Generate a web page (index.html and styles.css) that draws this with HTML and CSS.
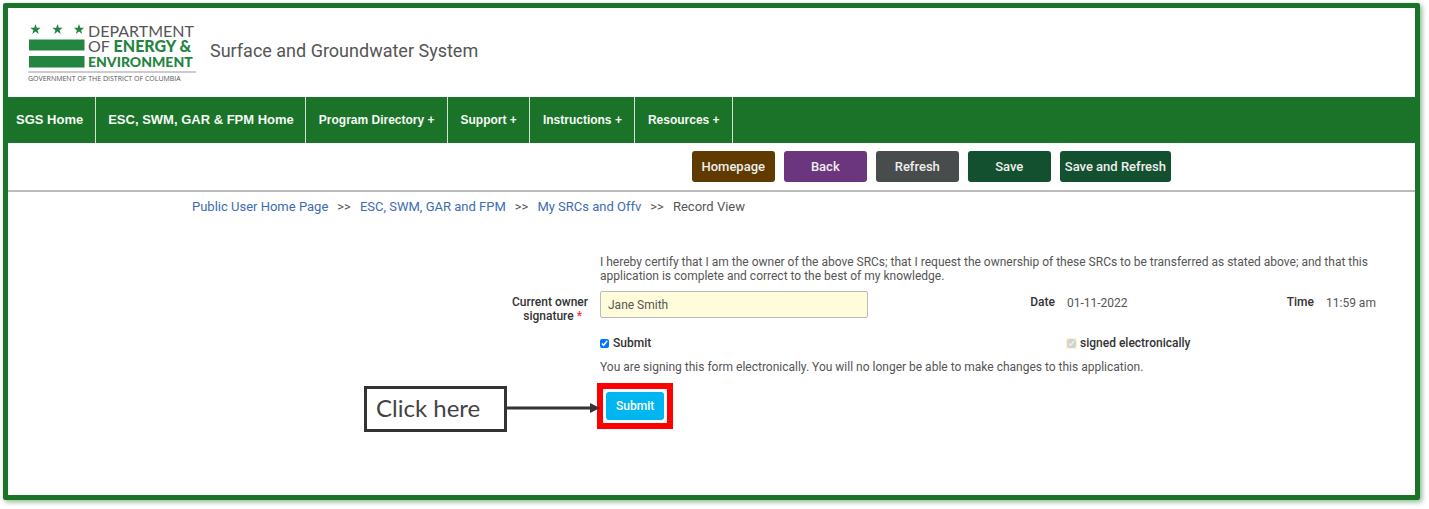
FILE: index.html
```html
<!DOCTYPE html>
<html lang="en">
<head>
<meta charset="utf-8">
<title>Surface and Groundwater System</title>
<link rel="stylesheet" href="styles.css">
</head>
<body>
<div class="frame">
  <header class="header">
    <svg class="logo" width="172" height="62" viewBox="26 22 172 62" role="img" aria-label="Department of Energy and Environment">
      <defs><path id="star" d="M0-5.4 1.3-1.7 5.2-1.7 2.1.7 3.2 4.4 0 2.1-3.2 4.4-2.1.7-5.2-1.7-1.3-1.7Z"/></defs>
      <g fill="#23853f">
        <use href="#star" x="35.500" y="29.500"/>
        <use href="#star" x="57.500" y="29.500"/>
        <use href="#star" x="79" y="29.500"/>
        <rect x="29" y="39.500" width="55.500" height="11"/>
        <rect x="29" y="56" width="55.500" height="11.500"/>
      </g>
      <rect x="28" y="71.500" width="168" height="1" fill="#999"/>
      <text class="logo-name" x="88" y="37">DEPARTMENT</text>
      <text class="logo-name" x="88" y="52">OF <tspan class="logo-strong">ENERGY &amp;</tspan></text>
      <text class="logo-name logo-last" x="88" y="67">ENVIRONMENT</text>
      <text class="logo-small" x="28" y="81">GOVERNMENT OF THE DISTRICT OF COLUMBIA</text>
    </svg>
    <h1 class="title">Surface and Groundwater System</h1>
  </header>
  <nav class="nav">
    <a class="home" href="#">SGS Home</a>
    <a class="home" href="#">ESC, SWM, GAR &amp; FPM Home</a>
    <a href="#">Program Directory +</a>
    <a href="#">Support +</a>
    <a href="#">Instructions +</a>
    <a href="#">Resources +</a>
  </nav>
  <div class="toolbar">
    <button class="btn brown">Homepage</button>
    <button class="btn purple">Back</button>
    <button class="btn gray">Refresh</button>
    <button class="btn green">Save</button>
    <button class="btn green">Save and Refresh</button>
  </div>
  <div class="crumbs">
    <a href="#">Public User Home Page</a><span>&gt;&gt;</span>
    <a href="#">ESC, SWM, GAR and FPM</a><span>&gt;&gt;</span>
    <a href="#">My SRCs and Offv</a><span>&gt;&gt;</span>
    <span>Record View</span>
  </div>
  <form class="form">
    <p class="wide certify">I hereby certify that I am the owner of the above SRCs; that I request the ownership of these SRCs to be transferred as stated above; and that this application is complete and correct to the best of my knowledge.</p>
    <label class="label owner" for="signature">Current owner<br>signature <span class="required">*</span></label>
    <input class="text" id="signature" type="text" value="Jane Smith">
    <span class="label">Date</span>
    <span class="value">01-11-2022</span>
    <span class="label">Time</span>
    <span class="value">11:59 am</span>
    <label class="check confirm"><input type="checkbox" checked>Submit</label>
    <label class="check signed"><input type="checkbox" checked disabled>signed electronically</label>
    <p class="wide notice">You are signing this form electronically. You will no longer be able to make changes to this application.</p>
    <div class="actions">
      <div class="callout">Click here</div>
      <svg class="arrow" width="93" height="12" viewBox="0 0 93 12" aria-hidden="true"><path d="M0 6H85" stroke="#333" stroke-width="3"/><path d="M83 1 93 6 83 11Z" fill="#333"/></svg>
      <div class="highlight"><button class="submit" type="button">Submit</button></div>
    </div>
  </form>
</div>
</body>
</html>
```
FILE: styles.css
```css
* { box-sizing: border-box; }
body {
  margin: 0;
  padding: 3px 9px 9px 3px;
  background: #fff;
  color: #555;
  font: 12px/14px Roboto, sans-serif;
}
p, h1 { margin: 0; }
a { text-decoration: none; }
button { border: 0; font-family: inherit; cursor: pointer; }

.frame {
  min-height: calc(100vh - 12px);
  border: 5px solid #1a7328;
  border-radius: 2px;
  box-shadow: 2px 2px 5px rgba(26, 115, 40, 0.5);
}

.header {
  display: flex;
  align-items: center;
  gap: 12px;
  padding: 14px 18px 13px;
}
.logo { flex: none; }
.logo-name { font: 16px Lato, sans-serif; fill: #555; }
.logo-strong { font-weight: 900; fill: #23853f; }
.logo-last { font-size: 14px; font-weight: 900; fill: #23853f; }
.logo-small { font: 7px "Open Sans", sans-serif; fill: #555; }
.title { padding-bottom: 4px; font-size: 18px; line-height: 24px; font-weight: 400; }

.nav { display: flex; background: #1a7328; }
.nav a {
  padding: 0 12px 0 13px;
  border-right: 1px solid #cfe3d2;
  color: #f4faf4;
  font: bold 12px/46px "Liberation Sans", Arial, sans-serif;
}
.nav .home { padding: 0 11px 0 12px; font-size: 13px; }
.nav .home:first-child { padding-left: 8px; padding-right: 12px; }

.toolbar {
  display: flex;
  justify-content: flex-end;
  gap: 9px;
  padding: 8px 244px 8px 0;
  border-bottom: 2px solid #bbb;
}
.btn {
  min-width: 83px;
  padding: 0 5px;
  border-radius: 3px;
  color: #eee;
  font-size: 13px;
  line-height: 31px;
  font-weight: 500;
}
.brown { background: #603b00; }
.purple { background: #6c367e; }
.gray { background: #494c4d; }
.green { background: #12502f; }

.crumbs {
  display: flex;
  gap: 9px;
  padding: 7px 184px;
  font-size: 13px;
  line-height: 16px;
}
.crumbs a { color: #3c6cb4; }

.form {
  display: grid;
  grid-template-columns: 580fr 268fr 175fr 120fr 115fr 89fr;
  column-gap: 12px;
  padding-top: 33px;
}
.wide { grid-column: 2 / -1; }
.certify { padding-right: 24px; }
.label {
  padding-top: 12px;
  text-align: right;
  color: #333;
  font-weight: 500;
}
.required { margin-right: 6px; color: #f33; }
.value { padding-top: 13px; }
.text {
  width: 100%;
  height: 27px;
  margin-top: 8px;
  padding: 0 7px;
  border: 1px solid #bbb;
  border-radius: 2px;
  background: #fffcdc;
  color: #555;
  font: inherit;
}
.check {
  display: flex;
  align-items: center;
  gap: 4px;
  margin-top: 13px;
  color: #333;
  font-weight: 500;
}
.check input { width: 9px; height: 9px; margin: 0; }
.confirm { grid-column: 2; }
.signed { grid-column: 4 / -1; }
.signed input { outline: 1px solid #fff6c4; }
.notice { padding-top: 10px; }

.actions {
  display: flex;
  grid-column: 1 / -1;
  align-items: flex-start;
  padding: 9px 0 0 356px;
}
.callout {
  width: 143px;
  margin-top: 3px;
  padding: 7px 9px 9px;
  border: 3px solid #333;
  background: #fff;
  color: #444;
  font: 24px/24px Lato, sans-serif;
}
.arrow { flex: none; margin: 19px -3px 0 0; z-index: 1; }
.highlight {
  display: flex;
  padding: 3px;
  border: 6px solid #f00;
}
.submit {
  padding: 0 10px;
  border-radius: 3px;
  background: #00b6f1;
  color: #fff;
  font-size: 12px;
  line-height: 28px;
  font-weight: 500;
}
```
